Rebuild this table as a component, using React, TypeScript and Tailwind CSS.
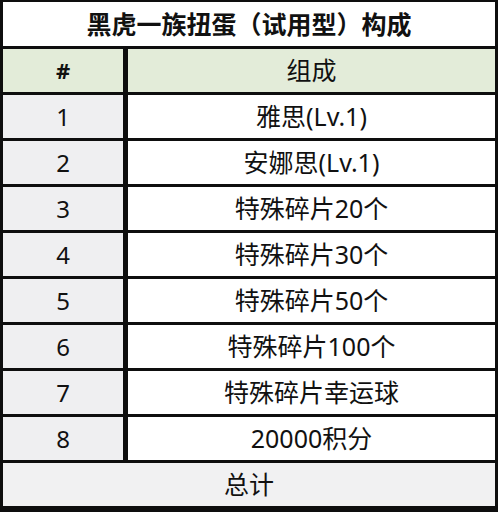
const rows = [
  "雅思(Lv.1)",
  "安娜思(Lv.1)",
  "特殊碎片20个",
  "特殊碎片30个",
  "特殊碎片50个",
  "特殊碎片100个",
  "特殊碎片幸运球",
  "20000积分",
];

const font = { fontFamily: '"Noto Sans", "Noto Sans CJK SC", sans-serif' };

export default function App() {
  return (
    <div
      className="flex h-[512px] w-[498px] flex-col gap-[3px] bg-[#0e0e0e] px-[3px] pb-[6px] pt-[2px] text-[#111]"
      style={font}
    >
      <div className="flex h-[44px] items-center justify-center bg-white text-[25px] font-bold leading-none">
        黑虎一族扭蛋（试用型）构成
      </div>
      <div className="grid h-[43px] grid-cols-[120px_1fr] gap-x-[5px]">
        <div className="flex items-center justify-center bg-[#e3ecd9] text-[22px] font-bold">#</div>
        <div className="flex items-center justify-center bg-[#e3ecd9] text-[25px]">组成</div>
      </div>
      {rows.map((r, i) => (
        <div key={i} className="grid h-[43px] grid-cols-[120px_1fr] gap-x-[5px]">
          <div className="flex items-center justify-center bg-[#efeff1] text-[24px]">{i + 1}</div>
          <div className="flex items-center justify-center bg-white text-[25px]">{r}</div>
        </div>
      ))}
      <div className="flex h-[43px] items-center justify-center bg-[#f1f1f2] text-[25px]">总计</div>
    </div>
  );
}
